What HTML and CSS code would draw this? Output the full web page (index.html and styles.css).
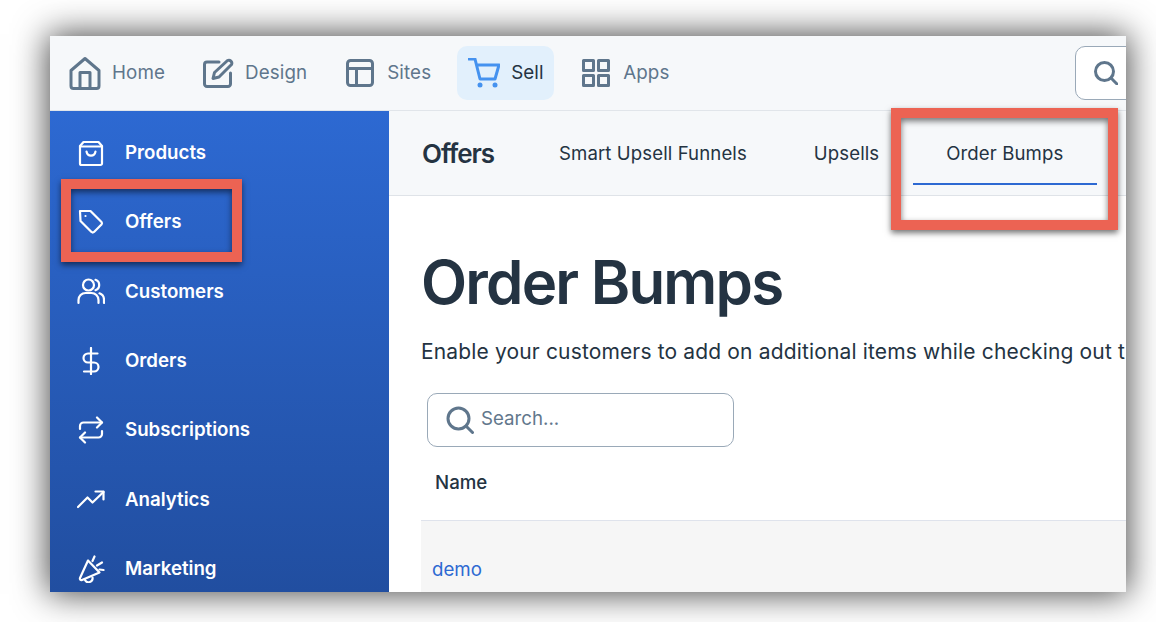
FILE: index.html
```html
<!DOCTYPE html>
<html lang="en">
<head>
<meta charset="utf-8">
<title>Order Bumps</title>
<link rel="stylesheet" href="styles.css">
</head>
<body>
<div class="frame">
  <header class="topbar">
    <a class="top-item home"><svg class="ti" width="32" height="34" viewBox="0 0 32 34"><path d="M2 14.500 16 2.500l14 12V30a2.500 2.500 0 0 1-2.500 2.500h-23A2.500 2.500 0 0 1 2 30z"/><path d="M11 32.500V16.500h10v16"/></svg><span>Home</span></a>
    <a class="top-item design"><svg class="ti" width="31" height="30" viewBox="0 0 31 30"><path d="M16 4H4a2.500 2.500 0 0 0-2.500 2.500V26A2.500 2.500 0 0 0 4 28.500h21a2.500 2.500 0 0 0 2.500-2.500V15"/><path d="M24.500 2.500a3 3 0 0 1 4 4L16 19l-6 1.500 1.500-6z"/></svg><span>Design</span></a>
    <a class="top-item sites"><svg class="ti" width="28" height="28" viewBox="0 0 28 28"><rect x="1.500" y="1.500" width="25" height="25" rx="3"/><path d="M1.500 9.500h25M10.500 9.500v17"/></svg><span>Sites</span></a>
    <a class="top-item sell"><svg class="cart" width="32" height="30" viewBox="0 0 32 30"><path d="M1 1h6l5 20h15l4-14H9"/><circle cx="12" cy="27" r="2.500" class="dot"/><circle cx="27" cy="27" r="2.500" class="dot"/></svg><span>Sell</span></a>
    <a class="top-item apps"><svg class="ti" width="28" height="28" viewBox="0 0 28 28"><rect x="1.500" y="1.500" width="10" height="10"/><rect x="16.500" y="1.500" width="10" height="10"/><rect x="1.500" y="16.500" width="10" height="10"/><rect x="16.500" y="16.500" width="10" height="10"/></svg><span>Apps</span></a>
    <div class="top-search"><svg class="ti" width="24" height="24" viewBox="0 0 24 24"><circle cx="10.500" cy="10.500" r="9"/><path d="m17 17 6 6"/></svg></div>
  </header>
  <div class="main">
    <nav class="sidebar">
      <a class="side-item"><svg class="si" width="28" height="28" viewBox="0 0 28 28"><path d="M6.500 3h15L25 7v17.500a1.500 1.500 0 0 1-1.500 1.500h-19A1.500 1.500 0 0 1 3 24.500V7z"/><path d="M3 7.500h22M9.500 12.500c1 5.500 8 5.500 9 0"/></svg><span>Products</span></a>
      <a class="side-item"><svg class="si" width="28" height="28" viewBox="0 0 28 28"><path d="M3 3h10.500l11 11a2 2 0 0 1 0 2.500l-7.500 7.500a2 2 0 0 1-2.500 0L3.500 13z"/><path d="M8.500 8h.01"/></svg><span>Offers</span></a>
      <a class="side-item"><svg class="si" width="28" height="28" viewBox="0 0 28 28"><circle cx="11.500" cy="8" r="5.500"/><path d="M1.500 26v-3a7 7 0 0 1 7-7h6a7 7 0 0 1 7 7v3M18.500 2.800a5.500 5.500 0 0 1 0 10.400M22.500 16.300a7 7 0 0 1 4.500 6.700v3"/></svg><span>Customers</span></a>
      <a class="side-item"><svg class="si" width="28" height="28" viewBox="0 0 28 28"><path d="M14 1v26M20.500 6.500H11a4.500 4.500 0 0 0 0 9h6a4.500 4.500 0 0 1 0 9H7"/></svg><span>Orders</span></a>
      <a class="side-item"><svg class="si" width="28" height="28" viewBox="0 0 28 28"><path d="m20 1.500 5 5-5 5"/><path d="M3 13v-3a3.500 3.500 0 0 1 3.500-3.500H25M8 26.500l-5-5 5-5"/><path d="M25 15v3a3.500 3.500 0 0 1-3.500 3.500H3"/></svg><span>Subscriptions</span></a>
      <a class="side-item"><svg class="si" width="28" height="28" viewBox="0 0 28 28"><path d="M1 22 10.500 12.500 15.500 17.500 26.500 7"/><path d="M18.500 6.500h8v8"/></svg><span>Analytics</span></a>
      <a class="side-item"><svg class="si" width="28" height="28" viewBox="0 0 28 28"><path d="M11 5.500 3 23a1.500 1.500 0 0 0 2 2l17.500-7.500z"/><path d="M8 25a4 4 0 0 0 7.500-2.500M15.500 6l2-4.500M20 10.500l5-3M22.500 14.500l4 .5"/></svg><span>Marketing</span></a>
    </nav>
    <div class="page">
      <div class="subnav">
        <div class="subtitle">Offers</div>
        <a class="tab">Smart Upsell Funnels</a>
        <a class="tab">Upsells</a>
        <a class="tab active">Order Bumps</a>
      </div>
      <main class="content">
        <h1>Order Bumps</h1>
        <p class="lead">Enable your customers to add on additional items while checking out t</p>
        <div class="search"><svg class="ti" width="28" height="28" viewBox="0 0 28 28"><circle cx="12.500" cy="12.500" r="10.500"/><path d="m20.500 20.500 6 6"/></svg><span>Search...</span></div>
        <div class="th">Name</div>
        <div class="row"><a class="row-link">demo</a></div>
      </main>
    </div>
  </div>
</div>
<div class="callout callout-offers"></div>
<div class="callout callout-tab"></div>
</body>
</html>
```
FILE: styles.css
```css
* { box-sizing: border-box; }
html, body { margin: 0; height: 622px; overflow: hidden; background: #fff; }
body { padding: 36px 30px 30px 50px; font-family: Inter, "Liberation Sans", sans-serif; color: #243342; }
.frame {
  width: 1076px; height: 556px; display: flex; flex-direction: column;
  overflow: hidden; background: #fff;
  box-shadow: 0 0 32px 2px rgba(0,0,0,.72);
}
svg { fill: none; stroke-width: 3; stroke-linecap: round; stroke-linejoin: round; flex: none; }
.ti { stroke: #5f768c; }
.si { stroke: #fff; stroke-width: 2.200; }
.cart { stroke: #4592ef; }
.dot { fill: #4592ef; stroke: none; }

.topbar { height: 75px; flex: none; display: flex; align-items: center; background: #f6f8fa; border-bottom: 1px solid #e1e5ea; padding-left: 19px; }
.top-item { flex: none; display: flex; align-items: center; font-size: 18.800px; line-height: 24px; color: #5f768c; letter-spacing: .1px; }
.home { gap: 11px; margin-right: 38px; }
.design { gap: 11px; margin-right: 39px; }
.sites { gap: 13px; margin-right: 26px; }
.sell { gap: 11px; width: 97px; height: 54px; padding-left: 11px; background: #e2f0fc; border-radius: 10px; color: #243342; margin-right: 28px; }
.apps { gap: 13px; }
.top-search { flex: none; width: 200px; height: 54px; margin-left: 406px; display: flex; align-items: center; padding-left: 18px; background: #fff; border: 1px solid #9aa9b8; border-radius: 10px; }

.main { flex: 1; min-height: 0; display: flex; }
.sidebar { width: 339px; flex: none; padding-top: 7px; background: linear-gradient(#2d69d2, #214ea0); }
.side-item { height: 69.330px; display: flex; align-items: center; gap: 20.500px; padding-left: 26.500px; color: #fff; font-size: 18.700px; font-weight: 600; }

.page { flex: 1; min-width: 0; display: flex; flex-direction: column; }
.subnav { height: 85px; flex: none; display: flex; background: #f6f8fa; border-bottom: 1px solid #dfe3e8; padding-left: 33px; }
.subtitle { font-size: 26px; font-weight: 600; letter-spacing: -1.100px; line-height: 86px; margin-right: 31.500px; width: 72px; white-space: nowrap; }
.tab { font-size: 18.600px; line-height: 84px; padding: 0 33.500px; white-space: nowrap; letter-spacing: .1px; }
.active { height: 74px; border-bottom: 2px solid #2d69d2; }

.content { flex: 1; min-height: 0; padding: 49px 0 0 32px; }
h1 { margin: 0; font-size: 60px; line-height: 74px; font-weight: 600; letter-spacing: -1.800px; white-space: nowrap; }
.lead { margin: 20px 0 0; font-size: 21px; line-height: 26px; white-space: nowrap; letter-spacing: .15px; }
.search { width: 307px; height: 54px; margin: 28px 0 0 6px; display: flex; align-items: center; gap: 7px; padding: 0 0 4px 18px; border: 1px solid #9aa9b8; border-radius: 10px; font-size: 18.700px; color: #62778c; }
.search svg { margin-top: 4px; }
.th { padding-left: 14px; height: 74px; font-size: 18.700px; font-weight: 500; line-height: 72px; border-bottom: 1px solid #dfe3ec; }
.row { height: 80px; padding: 37px 0 0 11px; background: #f6f6f6; }
.row-link { font-size: 18.700px; line-height: 24px; color: #2d69d2; display: block; }

.callout { position: absolute; border: 10px solid #ec6353; box-shadow: 0 3px 6px rgba(0,0,0,.55), inset 0 3px 6px rgba(0,0,0,.55); }
.callout-offers { left: 61px; top: 179px; width: 181px; height: 83px; }
.callout-tab { left: 891px; top: 108px; width: 227px; height: 122px; }
```
